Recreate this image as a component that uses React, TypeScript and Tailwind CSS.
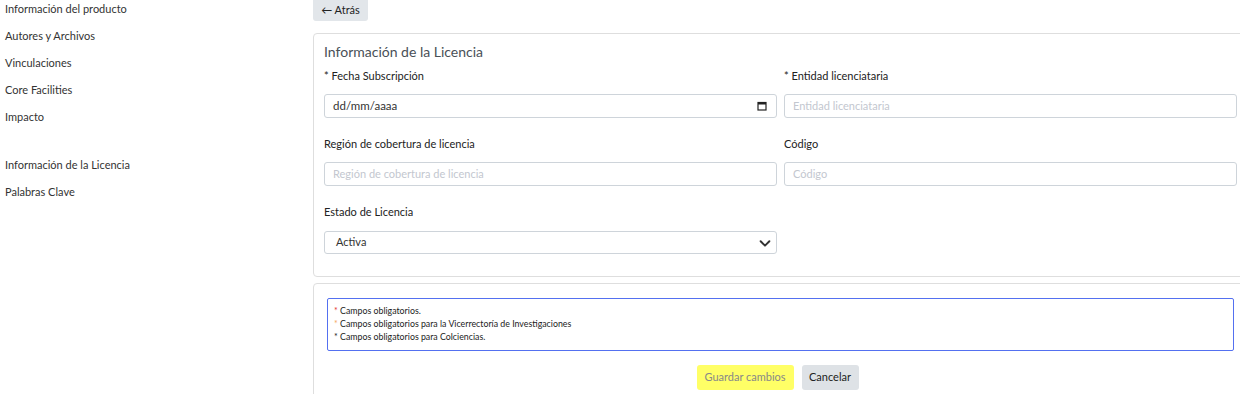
import React from "react";

const font = { fontFamily: "Lato, 'Open Sans', sans-serif" };

function SideItem({ children, className = "" }: { children: React.ReactNode; className?: string }) {
  return <div className={`h-[18px] leading-[18px] text-[11px] text-[#333] ${className}`}>{children}</div>;
}

function Label({ children, req }: { children: React.ReactNode; req?: boolean }) {
  return (
    <div className="h-[20px] leading-[20px] text-[11px] text-[#222]">
      {req && <span>* </span>}
      {children}
    </div>
  );
}

function TextBox({ placeholder }: { placeholder: string }) {
  return (
    <div className="h-[24px] border border-[#ced4da] rounded-[3px] bg-white px-[8px] flex items-center text-[11px] text-[#c3c7cf]">
      {placeholder}
    </div>
  );
}

export default function App() {
  return (
    <div className="w-[1240px] h-[394px] overflow-hidden bg-white flex" style={font}>
      <div className="w-[313px] shrink-0 pl-[5px] flex flex-col gap-[9px]">
        <SideItem>Información del producto</SideItem>
        <SideItem>Autores y Archivos</SideItem>
        <SideItem>Vinculaciones</SideItem>
        <SideItem>Core Facilities</SideItem>
        <SideItem>Impacto</SideItem>
        <SideItem className="mt-[21px]">Información de la Licencia</SideItem>
        <SideItem>Palabras Clave</SideItem>
      </div>
      <div className="w-[935px] shrink-0 flex flex-col">
        <div className="flex">
          <div className="h-[21px] w-[55px] bg-[#e2e6ea] rounded-b-[3px] flex items-center justify-center text-[11px] text-[#222]">
            ← Atrás
          </div>
        </div>
        <div className="mt-[12px] border border-[#dedede] rounded-[4px] px-[10px] pt-[8px] pb-[22px]">
          <div className="h-[20px] leading-[20px] text-[14px] text-[#495057]">Información de la Licencia</div>
          <div className="grid grid-cols-2 gap-x-[7px] mt-[4px]">
            <div className="flex flex-col">
              <Label req>Fecha Subscripción</Label>
              <div className="mt-[8px] h-[24px] border border-[#ced4da] rounded-[3px] bg-white pl-[8px] pr-[9px] flex items-center justify-between text-[11.5px] text-[#333]">
                <span>dd/mm/aaaa</span>
                <svg width="10" height="10" viewBox="0 0 10 10">
                  <rect x="1" y="1.5" width="8" height="7.5" fill="none" stroke="#222" strokeWidth="1.2" />
                  <rect x="1" y="1.5" width="8" height="2" fill="#222" />
                </svg>
              </div>
            </div>
            <div className="flex flex-col">
              <Label req>Entidad licenciataria</Label>
              <div className="mt-[8px]">
                <TextBox placeholder="Entidad licenciataria" />
              </div>
            </div>
            <div className="flex flex-col mt-[16px]">
              <Label>Región de cobertura de licencia</Label>
              <div className="mt-[8px]">
                <TextBox placeholder="Región de cobertura de licencia" />
              </div>
            </div>
            <div className="flex flex-col mt-[16px]">
              <Label>Código</Label>
              <div className="mt-[8px]">
                <TextBox placeholder="Código" />
              </div>
            </div>
            <div className="flex flex-col mt-[16px]">
              <Label>Estado de Licencia</Label>
              <div className="mt-[9px] h-[23px] border border-[#ced4da] rounded-[3px] bg-white pl-[11px] pr-[4px] flex items-center justify-between text-[11px] text-[#333]">
                <span>Activa</span>
                <svg width="14" height="14" viewBox="0 0 16 16">
                  <path d="M3 6l5 5 5-5" fill="none" stroke="#333" strokeWidth="2.2" strokeLinecap="round" strokeLinejoin="round" />
                </svg>
              </div>
            </div>
          </div>
        </div>
        <div className="mt-[6px] border border-[#dedede] rounded-[4px] px-[13px] pt-[14px] pb-[10px] flex flex-col">
          <div className="h-[53px] border border-[#5470f0] rounded-[2px] pl-[6px] pt-[5px] text-[8.8px] leading-[13px] text-[#222]">
            <div><span className="text-[#e3342f]">*</span> Campos obligatorios.</div>
            <div><span className="text-[#f4a460]">*</span> Campos obligatorios para la Vicerrectoría de Investigaciones</div>
            <div><span className="text-[#222]">*</span> Campos obligatorios para Colciencias.</div>
          </div>
          <div className="mt-[14px] flex justify-center gap-[8px] pr-[6px]">
            <div className="h-[25px] w-[97px] rounded-[3px] bg-[#ffff66] flex items-center justify-center text-[11px] text-[#888]">
              Guardar cambios
            </div>
            <div className="h-[25px] w-[57px] rounded-[3px] bg-[#dee2e6] flex items-center justify-center text-[11px] text-[#222]">
              Cancelar
            </div>
          </div>
        </div>
      </div>
    </div>
  );
}
